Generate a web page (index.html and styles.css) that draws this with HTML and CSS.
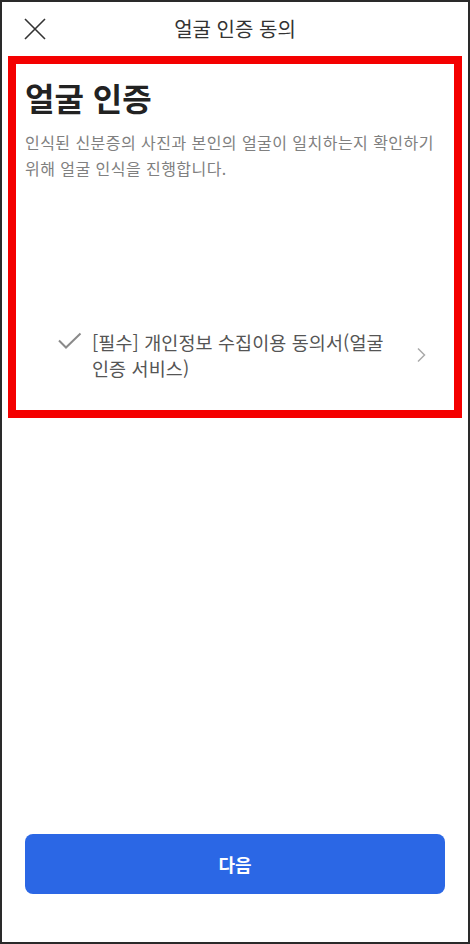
FILE: index.html
```html
<!DOCTYPE html>
<html lang="ko">
<head>
<meta charset="utf-8">
<title>얼굴 인증 동의</title>
<link rel="stylesheet" href="styles.css">
</head>
<body>
<div class="screen">
  <header class="topbar">
    <button class="close" aria-label="닫기">
      <svg width="24" height="24" viewBox="0 0 24 24"><path d="M2 2 L22 22 M22 2 L2 22" stroke="#333" stroke-width="1.6" fill="none"/></svg>
    </button>
    <h1 class="title">얼굴 인증 동의</h1>
    <span class="spacer"></span>
  </header>
  <section class="box">
    <h2 class="heading">얼굴 인증</h2>
    <p class="desc">인식된 신분증의 사진과 본인의 얼굴이 일치하는지 확인하기 위해 얼굴 인식을 진행합니다.</p>
    <div class="agree">
      <svg class="check" width="24" height="24" viewBox="0 0 24 24"><path d="M1 9.5 L8 16.5 L22.5 2.5" stroke="#8a8a8a" stroke-width="2" fill="none"/></svg>
      <span class="agree-text">[필수] 개인정보 수집이용 동의서(얼굴 인증 서비스)</span>
      <svg class="chev" width="10" height="16" viewBox="0 0 10 16"><path d="M2 1.5 L8.5 8 L2 14.5" stroke="#aaa" stroke-width="1.5" fill="none"/></svg>
    </div>
  </section>
  <div class="fill"></div>
  <button class="next">다음</button>
</div>
</body>
</html>
```
FILE: styles.css
```css
html, body {
  margin: 0;
  padding: 0;
  background: #fff;
}
body {
  font-family: "Noto Sans CJK KR", "Noto Sans", sans-serif;
}
.screen {
  width: 470px;
  height: 944px;
  box-sizing: border-box;
  border: 2px solid #2a2a2a;
  display: flex;
  flex-direction: column;
  background: #fff;
}
.topbar {
  height: 54px;
  display: grid;
  grid-template-columns: 1fr auto 1fr;
  align-items: center;
  padding: 0 21px;
}
.close {
  border: 0;
  background: none;
  padding: 0;
  width: 24px;
  height: 24px;
  display: flex;
}
.title {
  margin: 0;
  font-size: 20px;
  font-weight: 400;
  color: #333;
  letter-spacing: 0;
  line-height: 28px;
}
.box {
  margin: 0 6px;
  height: 362px;
  box-sizing: border-box;
  border: 8px solid #f40000;
  padding: 11px 9px 0;
  display: flex;
  flex-direction: column;
}
.heading {
  margin: 0;
  font-size: 32px;
  font-weight: 700;
  color: #222;
  line-height: 44px;
  letter-spacing: 0;
}
.desc {
  margin: 10px 0 0;
  font-size: 16px;
  line-height: 26px;
  letter-spacing: 0.45px;
  color: #808080;
}
.agree {
  margin: auto 19px 29px 33px;
  display: flex;
  align-items: center;
}
.check {
  flex: none;
  align-self: flex-start;
  margin-top: 2px;
}
.agree-text {
  flex: 1;
  margin-left: 10px;
  padding-right: 14px;
  font-size: 18.5px;
  line-height: 26px;
  letter-spacing: 0.1px;
  color: #555;
}
.chev {
  flex: none;
}
.fill {
  flex: 1;
}
.next {
  margin: 0 23px 48px;
  height: 60px;
  border: 0;
  border-radius: 8px;
  background: #2b67e5;
  color: #fff;
  font-family: "Noto Sans CJK KR", "Noto Sans", sans-serif;
  font-size: 18px;
  font-weight: 700;
}
```
